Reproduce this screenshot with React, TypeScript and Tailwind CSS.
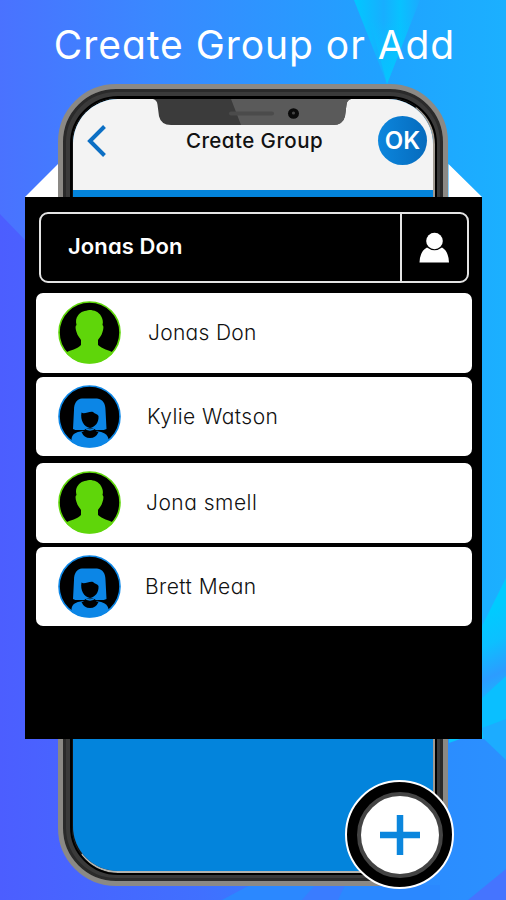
import clsx from "clsx";

interface Contact {
  name: string;
  avatar: "man" | "woman";
  row: string;
  label: string;
}

const contacts: Contact[] = [
  { name: "Jonas Don", avatar: "man", row: "", label: "ml-[27px] tracking-[0.3px]" },
  { name: "Kylie Watson", avatar: "woman", row: "mt-1", label: "ml-[26px] tracking-[0.45px]" },
  { name: "Jona smell", avatar: "man", row: "mt-[7px]", label: "ml-[25px] tracking-[0.5px]" },
  { name: "Brett Mean", avatar: "woman", row: "mt-1", label: "ml-[24px] tracking-[0.45px]" },
];

const Backdrop = () => (
  <svg className="absolute inset-0" width="506" height="900" viewBox="0 0 506 900">
    <defs>
      <linearGradient id="base" x1="0" y1="0" x2="1" y2="0">
        <stop offset="0" stopColor="#4a72ff" />
        <stop offset="0.3" stopColor="#3a88ff" />
        <stop offset="0.75" stopColor="#20a2ff" />
        <stop offset="1" stopColor="#1bb0ff" />
      </linearGradient>
      <linearGradient id="low" x1="0" y1="0" x2="1" y2="0">
        <stop offset="0" stopColor="#4c5eff" />
        <stop offset="0.4" stopColor="#4070ff" />
        <stop offset="0.75" stopColor="#2b8aff" />
        <stop offset="1" stopColor="#2b90ff" />
      </linearGradient>
      <linearGradient id="shard" x1="0" y1="0" x2="1" y2="0">
        <stop offset="0" stopColor="#00c8ff" />
        <stop offset="0.45" stopColor="#18aeff" />
        <stop offset="0.7" stopColor="#08c2ff" />
        <stop offset="1" stopColor="#1caaff" />
      </linearGradient>
      <linearGradient id="tip" x1="0" y1="0" x2="0" y2="1">
        <stop offset="0" stopColor="#04c6ff" stopOpacity="0" />
        <stop offset="1" stopColor="#04c6ff" />
      </linearGradient>
      <linearGradient id="fold" gradientUnits="userSpaceOnUse" x1="470" y1="620" x2="515" y2="710">
        <stop offset="0" stopColor="#00cbff" />
        <stop offset="0.3" stopColor="#0cc0ff" />
        <stop offset="0.6" stopColor="#2c9cff" />
        <stop offset="0.75" stopColor="#1eaeff" />
        <stop offset="1" stopColor="#08c4ff" />
      </linearGradient>
    </defs>
    <rect width="506" height="900" fill="url(#base)" />
    <path d="M0 214 L25 240 V739 H506 V900 H0 Z" fill="url(#low)" />
    <path d="M354 0 H420 L387 84 Z" fill="url(#shard)" />
    <path d="M370 20 H412 L387 84 Z" fill="url(#tip)" />
    <path d="M482 600 H506 V739 H482 Z" fill="#1bb0ff" />
    <path d="M506 578 L482 626 V739 L506 720 Z" fill="url(#fold)" />
    <path d="M482 698 L506 676 V720 L482 730 Z" fill="#0abfff" />
    <path d="M449 739 H460 L449 743 Z" fill="#06c6ff" />
    <path d="M482 728 L506 719 V760 L484 739 Z" fill="#1cacff" />
    <path d="M222 900 L250 885 H440 V900 Z" fill="#2b88ff" />
    <path d="M302 900 L315 885 H345 L338 900 Z" fill="#3a7cff" />
    <path d="M506 869 L468 900 H506 Z" fill="#4574ff" />
  </svg>
);

const ManAvatar = () => (
  <svg width="63" height="63" viewBox="0 0 63 63">
    <defs>
      <clipPath id="manClip">
        <circle cx="31.5" cy="31.5" r="31" />
      </clipPath>
    </defs>
    <circle cx="31.5" cy="31.5" r="30.5" fill="#000" stroke="#5fd60a" strokeWidth="1.6" />
    <path
      clipPath="url(#manClip)"
      fill="#5fd60a"
      d="M31.5 9 C36 9 41 11 43 15 C44.5 18 45.5 20 44.5 24 C46 25 45.5 28 44.5 31 C43.5 35 41 37 40 39 V44 C44 48 51 49 56 52 L60 63 H3 L7 52 C12 49 20 48 23 44 V39 C22 37 19.5 35 18.5 31 C17.5 28 17 25 18.5 24 C17.5 20 18 17 20 14.5 C23 10 27 10 31.5 9 Z"
    />
  </svg>
);

const WomanAvatar = () => (
  <svg width="63" height="63" viewBox="0 0 63 63">
    <defs>
      <clipPath id="womanClip">
        <circle cx="31.5" cy="31.5" r="31" />
      </clipPath>
    </defs>
    <circle cx="31.5" cy="31.5" r="30.5" fill="#000" stroke="#0c86e6" strokeWidth="1.6" />
    <g clipPath="url(#womanClip)" fill="#0c86e6">
      <path d="M24 13.5 H39 C45 14 47.5 19 47.5 25 L48.5 44 C46 45.5 42 45.5 38 45 H25 C21 45.5 17 45.5 15 44 L16 25 C16 18 19 14 24 13.5 Z" />
      <path d="M13.5 63 V54 C14 49 18 47 24 46 H39 C45 47 49.5 49 50.5 54 V63 Z" />
    </g>
    <path d="M23.5 27.5 C26 30 32 25.5 35 27 C37 29 39.5 29 40.5 31 C41 37 37.5 42 32 43 C26 42 22 35 23.5 27.5 Z" fill="#000" />
    <path d="M14.5 45.7 H24 M39.5 45.7 H49" stroke="#000" strokeWidth="1.2" />
    <path d="M23.5 47 Q27 46.5 27 43.5 H37 Q37 46.5 40.5 47 Q38 53 32 53 Q26 53 23.5 47 Z" fill="#000" />
    <path d="M26 42.5 Q32 47.5 38 42.5" fill="none" stroke="#0c86e6" strokeWidth="1.3" />
  </svg>
);

const PhoneHeader = () => (
  <div className="relative h-[91px] shrink-0 bg-[#f3f3f3]">
    <svg className="absolute left-[80px] top-0" width="198" height="27" viewBox="0 0 198 28" preserveAspectRatio="none">
      <path d="M0 0 H198 Q194 1 193.5 6 L192 18 Q190 27 180 27 H18 Q8 27 6 18 L4.5 6 Q4 1 0 0 Z" fill="#3b3b3b" />
      <path d="M78 0 H198 Q194 1 193.5 6 L192 18 Q190 27 180 27 H88 Z" fill="#5a5a5a" />
      <rect x="76" y="13" width="45" height="4" rx="2" fill="#4b4b4b" />
      <circle cx="140.5" cy="15" r="5.5" fill="#0a0a0a" />
      <circle cx="140.5" cy="14.5" r="1.6" fill="#444" />
    </svg>
    <div className="flex h-full items-start justify-between pl-[13px] pr-[6px] pt-[17px]">
      <svg className="mt-[8px]" width="21" height="34" viewBox="0 0 21 34">
        <path d="M18.5 2.5 L4 17 L18.5 31.5" fill="none" stroke="#0c6fc4" strokeWidth="4" />
      </svg>
      <h2 className="mt-[10px] pl-6 text-[20.5px] leading-[30px] font-medium tracking-[0.45px] whitespace-nowrap text-[#111]">
        Create Group
      </h2>
      <button className="size-[49px] rounded-full bg-linear-to-r from-[#0c86dd] to-[#066bbd] text-2xl leading-none font-semibold text-white">
        OK
      </button>
    </div>
  </div>
);

const Phone = () => (
  <div className="h-[802px] w-[390px] rounded-[58px] border-[5px] border-[#8b8985] bg-[#3a3a3a] p-[9px] pr-[8px] pb-[8px] shadow-[inset_0_0_0_3px_#2a2a2a]">
    <div className="h-full rounded-[46px] border-t border-r-2 border-b-2 border-l border-t-black border-r-[#a09a92] border-b-[#b4b4b0] border-l-[#111] outline-2 outline-black">
      <div className="flex h-full flex-col overflow-hidden rounded-[45px] bg-[#0384dc]">
        <PhoneHeader />
      </div>
    </div>
  </div>
);

const Panel = () => (
  <div className="absolute left-[25px] top-[197px] flex h-[542px] w-[457px] flex-col bg-black pt-[15px] pr-[10.5px] pl-[11px]">
    <div className="mx-[3px] flex h-[71px] shrink-0 rounded-[9px] border-2 border-[#e4e4e4]">
      <div className="flex flex-1 items-center pb-0.5 pl-[27px] text-[22px] font-semibold text-white">
        <span className="tracking-[0.1px]">Jonas Don</span>
      </div>
      <div className="flex w-[67px] items-center justify-center border-l-2 border-[#e4e4e4]">
        <svg className="mb-px" width="30" height="31" viewBox="0 0 30 31">
          <circle cx="15.5" cy="9" r="8.3" fill="#fff" />
          <path d="M8 15.5 Q15.5 21 23 15.5 Q29.5 19 30 30.5 H0.5 Q1 19 8 15.5 Z" fill="#fff" />
        </svg>
      </div>
    </div>
    <ul className="mt-[10px]">
      {contacts.map((contact) => (
        <li
          key={contact.name}
          className={clsx("flex h-[79.5px] items-center rounded-[7px] bg-white pl-[22px]", contact.row)}
        >
          {contact.avatar === "man" ? <ManAvatar /> : <WomanAvatar />}
          <span className={clsx("text-[21px] leading-none font-light text-[#111]", contact.label)}>
            {contact.name}
          </span>
        </li>
      ))}
    </ul>
  </div>
);

export default function App() {
  return (
    <div className="relative h-[900px] w-[506px] overflow-hidden font-['Inter',sans-serif] [font-feature-settings:'cv11']">
      <Backdrop />
      <div className="relative flex flex-col items-center">
        <h1 className="h-[84px] pt-[17px] pl-[3px] text-[39px] leading-[56px] tracking-[0.95px] whitespace-nowrap text-white">
          Create Group or Add
        </h1>
        <Phone />
      </div>
      {/* folded corners behind the popped out list */}
      <svg className="absolute left-[25px] top-[164px]" width="457" height="33" viewBox="0 0 457 33">
        <path d="M33 0 V33 H0 Z M423.5 0 V33 H457 Z" fill="#fff" />
      </svg>
      <Panel />
      <button className="absolute left-[345px] top-[780px] flex size-[109px] items-center justify-center rounded-full border-2 border-white bg-black">
        <span className="flex size-[86px] items-center justify-center rounded-full border-[4px] border-[#444] bg-white">
          <svg width="40" height="40" viewBox="0 0 40 40">
            <path d="M20 0 V40 M0 20 H40" stroke="#0b86dd" strokeWidth="6.5" />
          </svg>
        </span>
      </button>
    </div>
  );
}
